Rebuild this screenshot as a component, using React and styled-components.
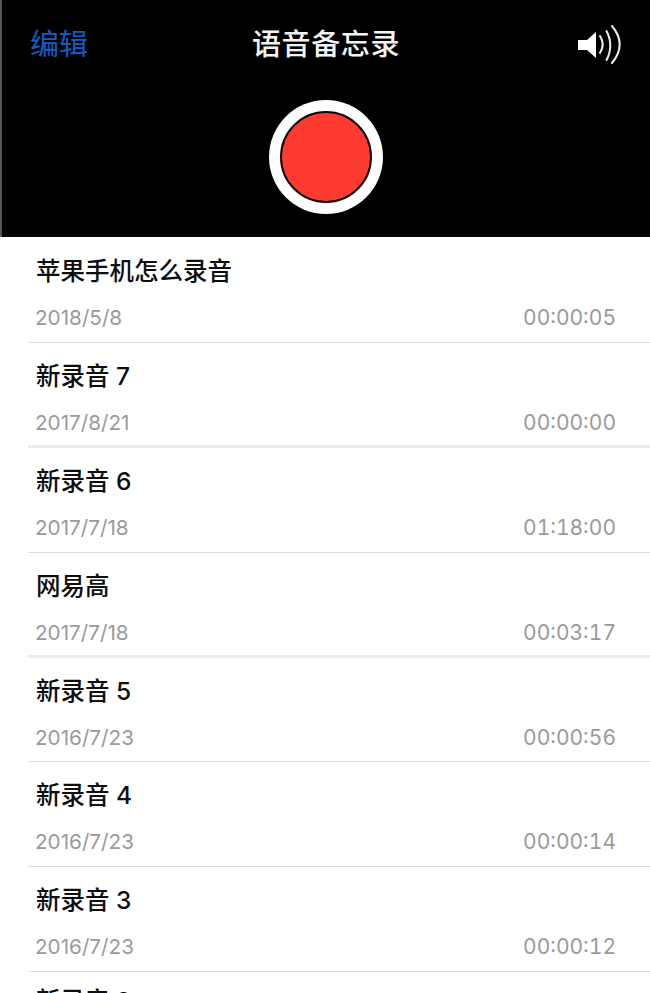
import React from 'react';
import styled, { createGlobalStyle } from 'styled-components';

const GlobalStyle = createGlobalStyle`
html, body {
    margin: 0;
    padding: 0;
    background: #fff;
    height: 993px;
    overflow: hidden;
}
`;

const Page = styled.div`
width: 650px;
height: 993px;
overflow: hidden;
font-family: 'Inter', 'Liberation Sans', 'Noto Sans CJK SC', sans-serif;
`;

const Header = styled.header`
height: 237px;
box-sizing: border-box;
background: #000;
border-left: 2px solid #555;
padding: 24px 28px 23px 28px;
display: flex;
flex-direction: column;
align-items: center;
justify-content: space-between;
`;

const NavBar = styled.div`
width: 100%;
height: 42px;
display: grid;
grid-template-columns: 1fr auto 1fr;
align-items: center;
`;

const EditLink = styled.span`
font-size: 29px;
line-height: 42px;
color: #0f5fc4;
`;

const Title = styled.h1`
margin: 0;
font-size: 29px;
font-weight: 500;
line-height: 42px;
letter-spacing: 0.6px;
color: #f4f4f4;
`;

const SpeakerWrap = styled.div`
justify-self: end;
display: flex;
`;

const RecordButton = styled.div`
width: 114px;
height: 114px;
box-sizing: border-box;
border-radius: 50%;
background: #fff;
display: flex;
align-items: center;
justify-content: center;
`;

const RecordDot = styled.div`
width: 92px;
height: 92px;
box-sizing: border-box;
border-radius: 50%;
background: #fe3b30;
border: 2px solid #120606;
`;

const List = styled.ul`
list-style: none;
margin: 0;
padding: 1px 0 0 28px;
`;

const Row = styled.li`
height: 104.9px;
box-sizing: border-box;
border-bottom: ${p => (p.$thick ? '3px solid #ececec' : '1px solid #dedede')};
padding: 16px 34px 0 8px;
`;

const PeekRow = styled.li`
padding: 12px 34px 0 8px;
`;

const Name = styled.div`
font-size: 24.5px;
line-height: 34px;
font-weight: 500;
color: #0e0e0e;
`;

const Meta = styled.div`
margin-top: 15px;
display: flex;
justify-content: space-between;
line-height: 30px;
color: #9a9a9a;
`;

const DateText = styled.span`
margin-left: -1px;
font-size: 20.7px;
`;

const TimeText = styled.span`
font-size: 21px;
font-variant-numeric: tabular-nums;
`;

const SpeakerIcon = () => (
    <svg width="46" height="40" viewBox="0 0 46 40" fill="none">
        <path d="M2 15h9l9-8v26l-9-8H2z" fill="#fff" />
        <path d="M24 11c3.500 5.500 3.500 11.500 0 17" stroke="#eee" strokeWidth="2" strokeLinecap="round" />
        <path d="M30.500 6c5 9 5 20 0 29" stroke="#eee" strokeWidth="2" strokeLinecap="round" />
        <path d="M36 1c10 12 10 25 0 37" stroke="#eee" strokeWidth="2" strokeLinecap="round" />
    </svg>
);

const memos = [
    { name: '苹果手机怎么录音', date: '2018/5/8', time: '00:00:05' },
    { name: '新录音 7', date: '2017/8/21', time: '00:00:00', thick: true },
    { name: '新录音 6', date: '2017/7/18', time: '01:18:00' },
    { name: '网易高', date: '2017/7/18', time: '00:03:17', thick: true },
    { name: '新录音 5', date: '2016/7/23', time: '00:00:56' },
    { name: '新录音 4', date: '2016/7/23', time: '00:00:14' },
    { name: '新录音 3', date: '2016/7/23', time: '00:00:12' },
];

const App = () => (
    <Page>
        <GlobalStyle />
        <Header>
            <NavBar>
                <EditLink>编辑</EditLink>
                <Title>语音备忘录</Title>
                <SpeakerWrap>
                    <SpeakerIcon />
                </SpeakerWrap>
            </NavBar>
            <RecordButton>
                <RecordDot />
            </RecordButton>
        </Header>
        <List>
            {memos.map(m => (
                <Row key={m.name} $thick={m.thick}>
                    <Name>{m.name}</Name>
                    <Meta>
                        <DateText>{m.date}</DateText>
                        <TimeText>{m.time}</TimeText>
                    </Meta>
                </Row>
            ))}
            <PeekRow>
                <Name>新录音 2</Name>
            </PeekRow>
        </List>
    </Page>
);

export default App;
